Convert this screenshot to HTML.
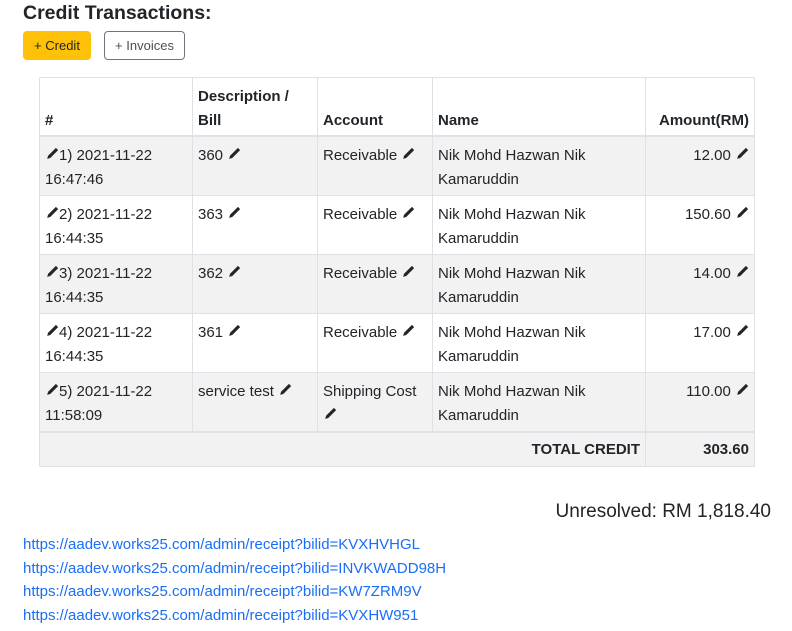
<!DOCTYPE html>
<html><head><meta charset="utf-8"><style>
body{margin:0;background:#fff;font-family:"Liberation Sans",sans-serif;color:#212529;width:792px;height:631px;overflow:hidden;position:relative}
h3{position:absolute;left:23px;top:1px;margin:0;font-size:19.5px;font-weight:bold;line-height:24px;color:#212529}
.btn{position:absolute;top:31px;height:29px;box-sizing:border-box;font-size:13px;line-height:27px;text-align:center;border-radius:4px}
.b1{left:23px;width:68px;background:#ffc107;border:1px solid #ffc107}
.b2{left:104px;width:81px;border:1px solid #6c757d;color:#495057}
table{position:absolute;left:39px;top:77px;border-collapse:collapse;font-size:15px;line-height:23.5px}
td,th{border:1px solid #dee2e6;padding:7px 5px 4px 5px;vertical-align:top;text-align:left}
th{vertical-align:bottom;font-weight:bold;padding-bottom:3px}
thead tr{border-bottom:2px solid #dee2e6}
tbody tr.g{background:#f2f2f2}
.r{text-align:right}
svg{width:14px;height:14px;vertical-align:-1px}
.un{position:absolute;right:21px;top:500px;font-size:19px;line-height:24px}
.links{position:absolute;left:23px;top:533px;font-size:15px;line-height:23.6px;color:#1a6ef5}
</style></head><body>
<h3>Credit Transactions:</h3>
<div class="btn b1">+ Credit</div>
<div class="btn b2">+ Invoices</div>
<table>
<colgroup><col style="width:153px"><col style="width:125px"><col style="width:115px"><col style="width:213px"><col style="width:109px"></colgroup>
<thead><tr style="height:58px"><th>#</th><th>Description /<br>Bill</th><th>Account</th><th>Name</th><th class="r">Amount(RM)</th></tr></thead>
<tbody>
<tr class="g"><td><svg viewBox="0 0 16 16"><path d="M12.5 1l2.5 2.5-9 9-3.5 1 1-3.5z" fill="#212529"/></svg>1) 2021-11-22<br>16:47:46</td><td>360 <svg viewBox="0 0 16 16"><path d="M12.5 1l2.5 2.5-9 9-3.5 1 1-3.5z" fill="#212529"/></svg></td><td>Receivable <svg viewBox="0 0 16 16"><path d="M12.5 1l2.5 2.5-9 9-3.5 1 1-3.5z" fill="#212529"/></svg></td><td>Nik Mohd Hazwan Nik<br>Kamaruddin</td><td class="r">12.00 <svg viewBox="0 0 16 16"><path d="M12.5 1l2.5 2.5-9 9-3.5 1 1-3.5z" fill="#212529"/></svg></td></tr>
<tr><td><svg viewBox="0 0 16 16"><path d="M12.5 1l2.5 2.5-9 9-3.5 1 1-3.5z" fill="#212529"/></svg>2) 2021-11-22<br>16:44:35</td><td>363 <svg viewBox="0 0 16 16"><path d="M12.5 1l2.5 2.5-9 9-3.5 1 1-3.5z" fill="#212529"/></svg></td><td>Receivable <svg viewBox="0 0 16 16"><path d="M12.5 1l2.5 2.5-9 9-3.5 1 1-3.5z" fill="#212529"/></svg></td><td>Nik Mohd Hazwan Nik<br>Kamaruddin</td><td class="r">150.60 <svg viewBox="0 0 16 16"><path d="M12.5 1l2.5 2.5-9 9-3.5 1 1-3.5z" fill="#212529"/></svg></td></tr>
<tr class="g"><td><svg viewBox="0 0 16 16"><path d="M12.5 1l2.5 2.5-9 9-3.5 1 1-3.5z" fill="#212529"/></svg>3) 2021-11-22<br>16:44:35</td><td>362 <svg viewBox="0 0 16 16"><path d="M12.5 1l2.5 2.5-9 9-3.5 1 1-3.5z" fill="#212529"/></svg></td><td>Receivable <svg viewBox="0 0 16 16"><path d="M12.5 1l2.5 2.5-9 9-3.5 1 1-3.5z" fill="#212529"/></svg></td><td>Nik Mohd Hazwan Nik<br>Kamaruddin</td><td class="r">14.00 <svg viewBox="0 0 16 16"><path d="M12.5 1l2.5 2.5-9 9-3.5 1 1-3.5z" fill="#212529"/></svg></td></tr>
<tr><td><svg viewBox="0 0 16 16"><path d="M12.5 1l2.5 2.5-9 9-3.5 1 1-3.5z" fill="#212529"/></svg>4) 2021-11-22<br>16:44:35</td><td>361 <svg viewBox="0 0 16 16"><path d="M12.5 1l2.5 2.5-9 9-3.5 1 1-3.5z" fill="#212529"/></svg></td><td>Receivable <svg viewBox="0 0 16 16"><path d="M12.5 1l2.5 2.5-9 9-3.5 1 1-3.5z" fill="#212529"/></svg></td><td>Nik Mohd Hazwan Nik<br>Kamaruddin</td><td class="r">17.00 <svg viewBox="0 0 16 16"><path d="M12.5 1l2.5 2.5-9 9-3.5 1 1-3.5z" fill="#212529"/></svg></td></tr>
<tr class="g"><td><svg viewBox="0 0 16 16"><path d="M12.5 1l2.5 2.5-9 9-3.5 1 1-3.5z" fill="#212529"/></svg>5) 2021-11-22<br>11:58:09</td><td>service test <svg viewBox="0 0 16 16"><path d="M12.5 1l2.5 2.5-9 9-3.5 1 1-3.5z" fill="#212529"/></svg></td><td>Shipping Cost<br><svg viewBox="0 0 16 16"><path d="M12.5 1l2.5 2.5-9 9-3.5 1 1-3.5z" fill="#212529"/></svg></td><td>Nik Mohd Hazwan Nik<br>Kamaruddin</td><td class="r">110.00 <svg viewBox="0 0 16 16"><path d="M12.5 1l2.5 2.5-9 9-3.5 1 1-3.5z" fill="#212529"/></svg></td></tr>
<tr class="g" style="border-top:2px solid #dee2e6"><td colspan="4" class="r" style="font-weight:bold;padding:5px 5px 4px">TOTAL CREDIT</td><td class="r" style="font-weight:bold;padding:5px 5px 4px">303.60</td></tr>
</tbody></table>
<div class="un">Unresolved: RM 1,818.40</div>
<div class="links">https://aadev.works25.com/admin/receipt?bilid=KVXHVHGL<br>https://aadev.works25.com/admin/receipt?bilid=INVKWADD98H<br>https://aadev.works25.com/admin/receipt?bilid=KW7ZRM9V<br>https://aadev.works25.com/admin/receipt?bilid=KVXHW951</div>
</body></html>
